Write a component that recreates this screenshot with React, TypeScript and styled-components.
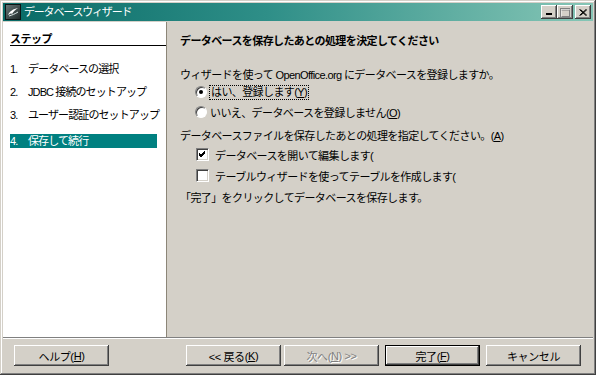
import styled, { createGlobalStyle } from 'styled-components';

const GlobalStyle = createGlobalStyle`
  html, body {
    margin: 0;
    padding: 0;
    background: #d4d0c8;
  }
  body {
    font-family: "Liberation Sans", "Noto Sans CJK JP", sans-serif;
    font-size: 11px;
    color: #000;
  }
`;

const Window = styled.div`
  width: 596px;
  height: 375px;
  box-sizing: border-box;
  padding: 3px;
  background: #d4d0c8;
  box-shadow: inset -1px -1px #404040, inset 1px 1px #d4d0c8,
    inset -2px -2px #808080, inset 2px 2px #ffffff;
  display: flex;
  flex-direction: column;
`;

const TitleBar = styled.div`
  height: 18px;
  display: flex;
  align-items: center;
  padding: 0 2px 0 2px;
  background: linear-gradient(to right, #086a66 0%, #2f8f88 45%, #86c6b6 100%);
`;

const TitleText = styled.span`
  margin-left: 3px;
  color: #fff;
  font-size: 11px;
  letter-spacing: -1.2px;
  line-height: 18px;
`;

const TitleControls = styled.div`
  margin-left: auto;
  display: flex;
  align-items: center;
`;

const TitleButton = styled.div<{ $gap?: number }>`
  width: 16px;
  height: 14px;
  box-sizing: border-box;
  margin-left: ${({ $gap }) => $gap ?? 0}px;
  background: #d4d0c8;
  box-shadow: inset -1px -1px #404040, inset 1px 1px #ffffff,
    inset -2px -2px #808080, inset 2px 2px #d4d0c8;
  display: flex;
  align-items: center;
  justify-content: center;
`;

const Body = styled.div`
  margin-top: 1px;
  height: 315px;
  display: flex;
`;

const Sidebar = styled.div`
  width: 164px;
  flex-shrink: 0;
  box-sizing: border-box;
  background: #fff;
  border-right: 1px solid #8c8678;
  padding: 11px 0 0 7px;
  overflow: hidden;
`;

const StepsHeading = styled.div`
  font-weight: bold;
  line-height: 12px;
  letter-spacing: -0.5px;
  border-bottom: 1px solid #000;
`;

const StepList = styled.div`
  margin-top: 16px;
  display: flex;
  flex-direction: column;
  gap: 9px;
`;

const StepItem = styled.div<{ $active?: boolean }>`
  height: 14px;
  line-height: 14px;
  margin-right: 9px;
  margin-top: ${({ $active }) => ($active ? 3 : 0)}px;
  display: flex;
  white-space: nowrap;
  letter-spacing: -0.9px;
  background: ${({ $active }) => ($active ? '#008080' : 'transparent')};
  color: ${({ $active }) => ($active ? '#fff' : '#000')};
`;

const StepNum = styled.span`
  width: 18px;
  flex-shrink: 0;
`;

const Content = styled.div`
  flex: 1;
  padding: 12px 0 0 13px;
  display: flex;
  flex-direction: column;
  white-space: nowrap;
`;

const Heading = styled.div`
  font-weight: bold;
  line-height: 14px;
  letter-spacing: -0.6px;
`;

const Line = styled.div<{ $top: number }>`
  margin-top: ${({ $top }) => $top}px;
  line-height: 14px;
  letter-spacing: -0.6px;
`;

const OptionRow = styled.div<{ $indent: number; $height: number; $top?: number }>`
  height: ${({ $height }) => $height}px;
  margin-top: ${({ $top }) => $top ?? 0}px;
  padding-left: ${({ $indent }) => $indent}px;
  display: flex;
  align-items: center;
  letter-spacing: -0.6px;
`;

const Radio = styled.span<{ $checked?: boolean }>`
  position: relative;
  width: 12px;
  height: 12px;
  box-sizing: border-box;
  border-radius: 50%;
  background: #fff;
  border: 1px solid;
  border-color: #808080 #ffffff #ffffff #808080;
  box-shadow: inset 1px 1px #404040;
  margin-right: 3px;
  flex-shrink: 0;

  &::after {
    content: '';
    display: ${({ $checked }) => ($checked ? 'block' : 'none')};
    position: absolute;
    left: 3px;
    top: 3px;
    width: 4px;
    height: 4px;
    border-radius: 50%;
    background: #000;
  }
`;

const Check = styled.span`
  width: 13px;
  height: 13px;
  box-sizing: border-box;
  background: #fff;
  border: 1px solid;
  border-color: #808080 #ffffff #ffffff #808080;
  box-shadow: inset 1px 1px #404040, inset -1px -1px #d4d0c8;
  margin-right: 6px;
  flex-shrink: 0;
  display: flex;
  align-items: center;
  justify-content: center;
`;

const Focus = styled.span`
  outline: 1px dotted #000;
  outline-offset: 0;
  padding: 0 1px;
  line-height: 13px;
`;

const Separator = styled.div`
  border-top: 1px solid #808080;
  border-bottom: 1px solid #ffffff;
`;

const ButtonBar = styled.div`
  flex: 1;
  display: flex;
  align-items: flex-start;
  padding: 6px 12px 0 11px;
`;

const Spacer = styled.div`
  flex: 1;
`;

const Button = styled.div<{ $default?: boolean; $disabled?: boolean; $gap?: number }>`
  width: 95px;
  height: 21px;
  box-sizing: border-box;
  margin-left: ${({ $gap }) => $gap ?? 0}px;
  background: #d4d0c8;
  display: flex;
  align-items: center;
  justify-content: center;
  white-space: nowrap;
  letter-spacing: -0.4px;
  color: ${({ $disabled }) => ($disabled ? '#808080' : '#000')};
  text-shadow: ${({ $disabled }) => ($disabled ? '1px 1px #ffffff' : 'none')};
  border: ${({ $default }) => ($default ? '1px solid #000' : 'none')};
  box-shadow: inset -1px -1px #404040, inset 1px 1px #ffffff,
    inset -2px -2px #808080, inset 2px 2px #d4d0c8;
`;

const AppIcon = () => (
  <svg width="16" height="16" viewBox="0 0 16 16">
    <defs>
      <linearGradient id="ic" x1="0" y1="0" x2="1" y2="1">
        <stop offset="0" stopColor="#6a7878" />
        <stop offset="1" stopColor="#1c2626" />
      </linearGradient>
    </defs>
    <rect x="0.5" y="0.5" width="15" height="15" fill="url(#ic)" stroke="#0c1414" />
    <path d="M3 11 C5 7, 8 5, 13 4 C10 6, 8 8, 7 10 C6 9, 5 10, 3 11 Z" fill="#ffffff" />
    <path d="M4 12 C7 11, 10 10, 13 8" stroke="#d8e4e4" strokeWidth="1" fill="none" />
  </svg>
);

const CheckMark = () => (
  <svg width="9" height="9" viewBox="0 0 9 9">
    <path d="M1 4 L3 6 L7 2 M1 5 L3 7 L7 3 M1 3 L3 5 L7 1" stroke="#000" strokeWidth="1" fill="none" />
  </svg>
);

export default function App() {
  return (
    <>
      <GlobalStyle />
      <Window>
        <TitleBar>
          <AppIcon />
          <TitleText>データベースウィザード</TitleText>
          <TitleControls>
            <TitleButton>
              <svg width="8" height="8" viewBox="0 0 8 8">
                <rect x="1" y="5" width="6" height="2" fill="#000" />
              </svg>
            </TitleButton>
            <TitleButton>
              <svg width="10" height="9" viewBox="0 0 10 9">
                <rect x="0.5" y="0.5" width="9" height="8" fill="none" stroke="#808080" />
                <rect x="0.5" y="1.5" width="9" height="1" fill="#808080" />
                <rect x="1.5" y="1.5" width="9" height="8" fill="none" stroke="#ffffff" strokeWidth="0.6" opacity="0.8" />
              </svg>
            </TitleButton>
            <TitleButton $gap={2}>
              <svg width="8" height="7" viewBox="0 0 8 7">
                <path d="M0.5 0.5 L7 6.5 M1.5 0.5 L8 6.5 M7 0.5 L0.5 6.5 M8 0.5 L1.5 6.5" stroke="#000" strokeWidth="1" />
              </svg>
            </TitleButton>
          </TitleControls>
        </TitleBar>

        <Body>
          <Sidebar>
            <StepsHeading>ステップ</StepsHeading>
            <StepList>
              <StepItem>
                <StepNum>1.</StepNum>データベースの選択
              </StepItem>
              <StepItem>
                <StepNum>2.</StepNum>JDBC 接続のセットアップ
              </StepItem>
              <StepItem>
                <StepNum>3.</StepNum>ユーザー認証のセットアップ
              </StepItem>
              <StepItem $active>
                <StepNum>4.</StepNum>保存して続行
              </StepItem>
            </StepList>
          </Sidebar>

          <Content>
            <Heading>データベースを保存したあとの処理を決定してください</Heading>
            <Line $top={20}>ウィザードを使って OpenOffice.org にデータベースを登録しますか。</Line>
            <OptionRow $indent={15} $height={20}>
              <Radio $checked />
              <Focus>
                はい、登録します(<u>Y</u>)
              </Focus>
            </OptionRow>
            <OptionRow $indent={15} $height={20}>
              <Radio />
              <span>
                いいえ、データベースを登録しません(<u>O</u>)
              </span>
            </OptionRow>
            <Line $top={7}>
              データベースファイルを保存したあとの処理を指定してください。(<u>A</u>)
            </Line>
            <OptionRow $indent={16} $height={21} $top={1}>
              <Check>
                <CheckMark />
              </Check>
              データベースを開いて編集します(
            </OptionRow>
            <OptionRow $indent={16} $height={21}>
              <Check />
              テーブルウィザードを使ってテーブルを作成します(
            </OptionRow>
            <Line $top={5}>「完了」をクリックしてデータベースを保存します。</Line>
          </Content>
        </Body>

        <Separator />

        <ButtonBar>
          <Button>
            ヘルプ(<u>H</u>)
          </Button>
          <Spacer />
          <Button>
            &lt;&lt; 戻る(<u>K</u>)
          </Button>
          <Button $disabled $gap={3}>
            次へ(<u>N</u>) &gt;&gt;
          </Button>
          <Button $default $gap={6}>
            完了(<u>F</u>)
          </Button>
          <Button $gap={6}>キャンセル</Button>
        </ButtonBar>
      </Window>
    </>
  );
}
